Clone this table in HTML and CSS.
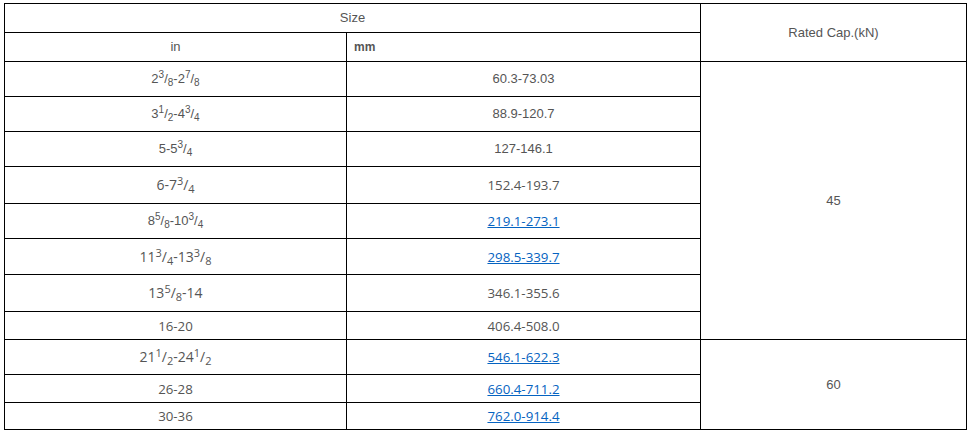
FILE: index.html
```html
<!DOCTYPE html>
<html>
<head>
<meta charset="utf-8">
<link rel="stylesheet" href="styles.css">
</head>
<body>
<table class="spec">
  <colgroup>
    <col class="c-in">
    <col class="c-mm">
    <col class="c-cap">
  </colgroup>
  <tr class="h29">
    <th colspan="2" class="hd">Size</th>
    <th rowspan="2" class="hd">Rated Cap.(kN)</th>
  </tr>
  <tr class="h29">
    <th class="hd">in</th>
    <th class="hd mm">mm</th>
  </tr>
  <tr class="h35 a">
    <td>2<sup>3</sup>/<sub>8</sub>-2<sup>7</sup>/<sub>8</sub></td>
    <td>60.3-73.03</td>
    <td rowspan="8" class="a cap">45</td>
  </tr>
  <tr class="h35 a">
    <td>3<sup>1</sup>/<sub>2</sub>-4<sup>3</sup>/<sub>4</sub></td>
    <td>88.9-120.7</td>
  </tr>
  <tr class="h35 a">
    <td>5-5<sup>3</sup>/<sub>4</sub></td>
    <td>127-146.1</td>
  </tr>
  <tr class="h37 s">
    <td class="fr">6-7<sup>3</sup>/<sub>4</sub></td>
    <td>152.4-193.7</td>
  </tr>
  <tr class="h35 s">
    <td class="a">8<sup>5</sup>/<sub>8</sub>-10<sup>3</sup>/<sub>4</sub></td>
    <td><a href="#">219.1-273.1</a></td>
  </tr>
  <tr class="h36 s">
    <td class="fr">11<sup>3</sup>/<sub>4</sub>-13<sup>3</sup>/<sub>8</sub></td>
    <td><a href="#">298.5-339.7</a></td>
  </tr>
  <tr class="h37 s">
    <td class="fr">13<sup>5</sup>/<sub>8</sub>-14</td>
    <td>346.1-355.6</td>
  </tr>
  <tr class="h28 s">
    <td>16-20</td>
    <td>406.4-508.0</td>
  </tr>
  <tr class="h35 s">
    <td class="fr">21<sup>1</sup>/<sub>2</sub>-24<sup>1</sup>/<sub>2</sub></td>
    <td><a href="#">546.1-622.3</a></td>
    <td rowspan="3" class="a cap">60</td>
  </tr>
  <tr class="h28 s">
    <td>26-28</td>
    <td><a href="#">660.4-711.2</a></td>
  </tr>
  <tr class="h27 s">
    <td>30-36</td>
    <td><a href="#">762.0-914.4</a></td>
  </tr>
</table>
</body>
</html>
```
FILE: styles.css
```css
html, body {
  margin: 0;
  padding: 0;
  background: #fff;
}
body {
  padding: 3px 0 0 4px;
}
.spec {
  border-collapse: collapse;
  table-layout: fixed;
  width: 962px;
  color: #555;
}
.c-in { width: 342px; }
.c-mm { width: 354px; }
.c-cap { width: 266px; }
.spec th, .spec td {
  border: 1px solid #000;
  padding: 0;
  text-align: center;
  vertical-align: middle;
  line-height: 16px;
}
.hd {
  font-family: "Liberation Sans", Arial, sans-serif;
  font-size: 13px;
  font-weight: normal;
  color: #555;
}
.hd.mm {
  text-align: left;
  padding-left: 7px;
  font-weight: bold;
  font-size: 12px;
}
.a td, td.a {
  font-family: "Liberation Sans", Arial, sans-serif;
  font-size: 13px;
}
.s td {
  font-family: "Open Sans", "Noto Sans", sans-serif;
  font-size: 13.3px;
}
.s td.a {
  font-family: "Liberation Sans", Arial, sans-serif;
  font-size: 13px;
}
.s td.fr {
  font-size: 14px;
}
.s td.fr sup, .s td.fr sub {
  font-size: 11px;
}
td.cap {
  font-family: "Liberation Sans", Arial, sans-serif;
  font-size: 13px;
}
sup, sub {
  font-size: 10px;
  line-height: 0;
}
sup { vertical-align: 5px; }
sub { vertical-align: -3px; }
.spec a {
  color: #0563c1;
  text-decoration: underline;
}
.h27 { height: 27px; }
.h28 { height: 28px; }
.h29 { height: 29px; }
.h35 { height: 35px; }
.h36 { height: 36px; }
.h37 { height: 37px; }
```
